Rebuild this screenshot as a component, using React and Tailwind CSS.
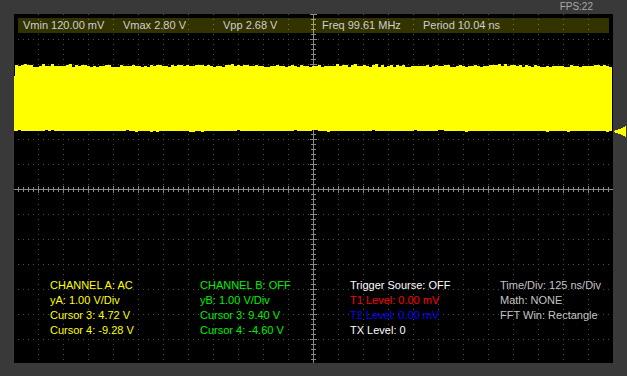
import React from 'react';

const W = 599;
const H = 349;
const CX = 299;
const CY = 175;

// small seeded generator so the noise on the trace stays the same each render
function rng(seed) {
  let s = seed;
  return () => {
    s = (s * 1103515245 + 12345) % 2147483648;
    return s / 2147483648;
  };
}

function tracePath() {
  const r = rng(7);
  let top = [];
  for (let x = 1; x <= 596; x += 3) {
    const v = r();
    const y = v < 0.45 ? 52 : v < 0.75 ? 51 : v < 0.92 ? 53 : 50;
    top.push(`${x},${y}`);
    top.push(`${x + 3},${y}`);
  }
  let bottom = [];
  for (let x = 598; x >= 1; x -= 3) {
    const v = r();
    const y = v < 0.92 ? 117 : v < 0.96 ? 116 : 118;
    bottom.push(`${x},${y}`);
    bottom.push(`${x - 3},${y}`);
  }
  return 'M' + top.join(' L') + ' L' + bottom.join(' L') + ' Z';
}

const wave = tracePath();

function Grid() {
  const vx = [];
  for (let x = 24; x < W; x += 25) vx.push(x);
  const hy = [];
  for (let y = 25; y < H; y += 25) hy.push(y);
  const ticksX = [];
  for (let x = 4; x < W; x += 5) ticksX.push(x);
  const ticksY = [];
  for (let y = 0; y < H; y += 5) ticksY.push(y);

  return (
    <svg className="absolute inset-0" width={W} height={H} shapeRendering="crispEdges">
      {vx.map(x => (
        <line key={'v' + x} x1={x + 0.5} y1={0} x2={x + 0.5} y2={H} stroke="#4e4e4e" strokeDasharray="1 4" />
      ))}
      {hy.map(y => (
        <line key={'h' + y} x1={4} y1={y + 0.5} x2={W} y2={y + 0.5} stroke="#4e4e4e" strokeDasharray="1 4" />
      ))}
      <line x1={0} y1={CY + 0.5} x2={W} y2={CY + 0.5} stroke="#8a8a8a" />
      <line x1={CX + 0.5} y1={0} x2={CX + 0.5} y2={H} stroke="#8a8a8a" />
      {ticksX.map(x => {
        const big = (x - CX) % 25 === 0;
        return <line key={'tx' + x} x1={x + 0.5} y1={CY - (big ? 3 : 2)} x2={x + 0.5} y2={CY + (big ? 4 : 3)} stroke="#8a8a8a" />;
      })}
      {ticksY.map(y => {
        const big = (y - CY) % 25 === 0;
        return <line key={'ty' + y} x1={CX - (big ? 3 : 2)} y1={y + 0.5} x2={CX + (big ? 4 : 3)} y2={y + 0.5} stroke="#8a8a8a" />;
      })}
      <path d={wave} fill="#ffff00" />
    </svg>
  );
}

const measures = ['Vmin 120.00 mV', 'Vmax 2.80 V', 'Vpp 2.68 V', 'Freq 99.61 MHz', 'Period 10.04 ns'];

const info = [
  [
    { t: 'CHANNEL A: AC', c: 'text-[#ffff00]' },
    { t: 'yA: 1.00 V/Div', c: 'text-[#ffff00]' },
    { t: 'Cursor 3: 4.72 V', c: 'text-[#ffff00]' },
    { t: 'Cursor 4: -9.28 V', c: 'text-[#ffff00]' },
  ],
  [
    { t: 'CHANNEL B: OFF', c: 'text-[#00f000]' },
    { t: 'yB: 1.00 V/Div', c: 'text-[#00f000]' },
    { t: 'Cursor 3: 9.40 V', c: 'text-[#00f000]' },
    { t: 'Cursor 4: -4.60 V', c: 'text-[#00f000]' },
  ],
  [
    { t: 'Trigger Sourse: OFF', c: 'text-white' },
    { t: 'T1 Level: 0.00 mV', c: 'text-[#ff0000]' },
    { t: 'T2 Level: 0.00 mV', c: 'text-[#0000ff]' },
    { t: 'TX Level: 0', c: 'text-white' },
  ],
  [
    { t: 'Time/Div: 125 ns/Div', c: 'text-[#c4c4c4]' },
    { t: 'Math: NONE', c: 'text-[#c4c4c4]' },
    { t: 'FFT Win: Rectangle', c: 'text-[#c4c4c4]' },
  ],
];

export default function App() {
  return (
    <div className="w-[627px] h-[376px] bg-[#393939] flex flex-col overflow-hidden" style={{ fontFamily: '"Liberation Sans", Arial, sans-serif' }}>
      <div className="h-[14px] flex justify-end items-center pr-[34px] text-[10px] leading-none text-[#a8a8a8]">FPS:22</div>
      <div className="flex relative">
        <div className="ml-[14px] w-[599px] h-[349px] bg-black relative flex flex-col justify-between">
          <Grid />
          <div className="relative mt-[4px] mx-[4px] h-[15px] bg-[#ffff00]/20 grid grid-cols-[100px_100px_99px_101px_1fr] pl-[5px] text-[11px] leading-[15px] text-[#cfcfcf]">
            {measures.map(m => (
              <span key={m} className="whitespace-nowrap">{m}</span>
            ))}
          </div>
          <div className="relative grid grid-cols-[150px_150px_150px_1fr] pl-[36px] pb-[25px] text-[11px] leading-[15px]">
            {info.map((col, i) => (
              <div key={i} className="flex flex-col">
                {col.map(l => (
                  <span key={l.t} className={'whitespace-nowrap ' + l.c}>{l.t}</span>
                ))}
              </div>
            ))}
          </div>
        </div>
        <svg className="absolute left-[614px] top-[112px]" width="13" height="11" shapeRendering="crispEdges">
          <polygon points="0,5 2,4 5,3 8,2 12,0 12,11 8,9 5,8 2,7 0,6" fill="#ffff00" />
        </svg>
      </div>
    </div>
  );
}
